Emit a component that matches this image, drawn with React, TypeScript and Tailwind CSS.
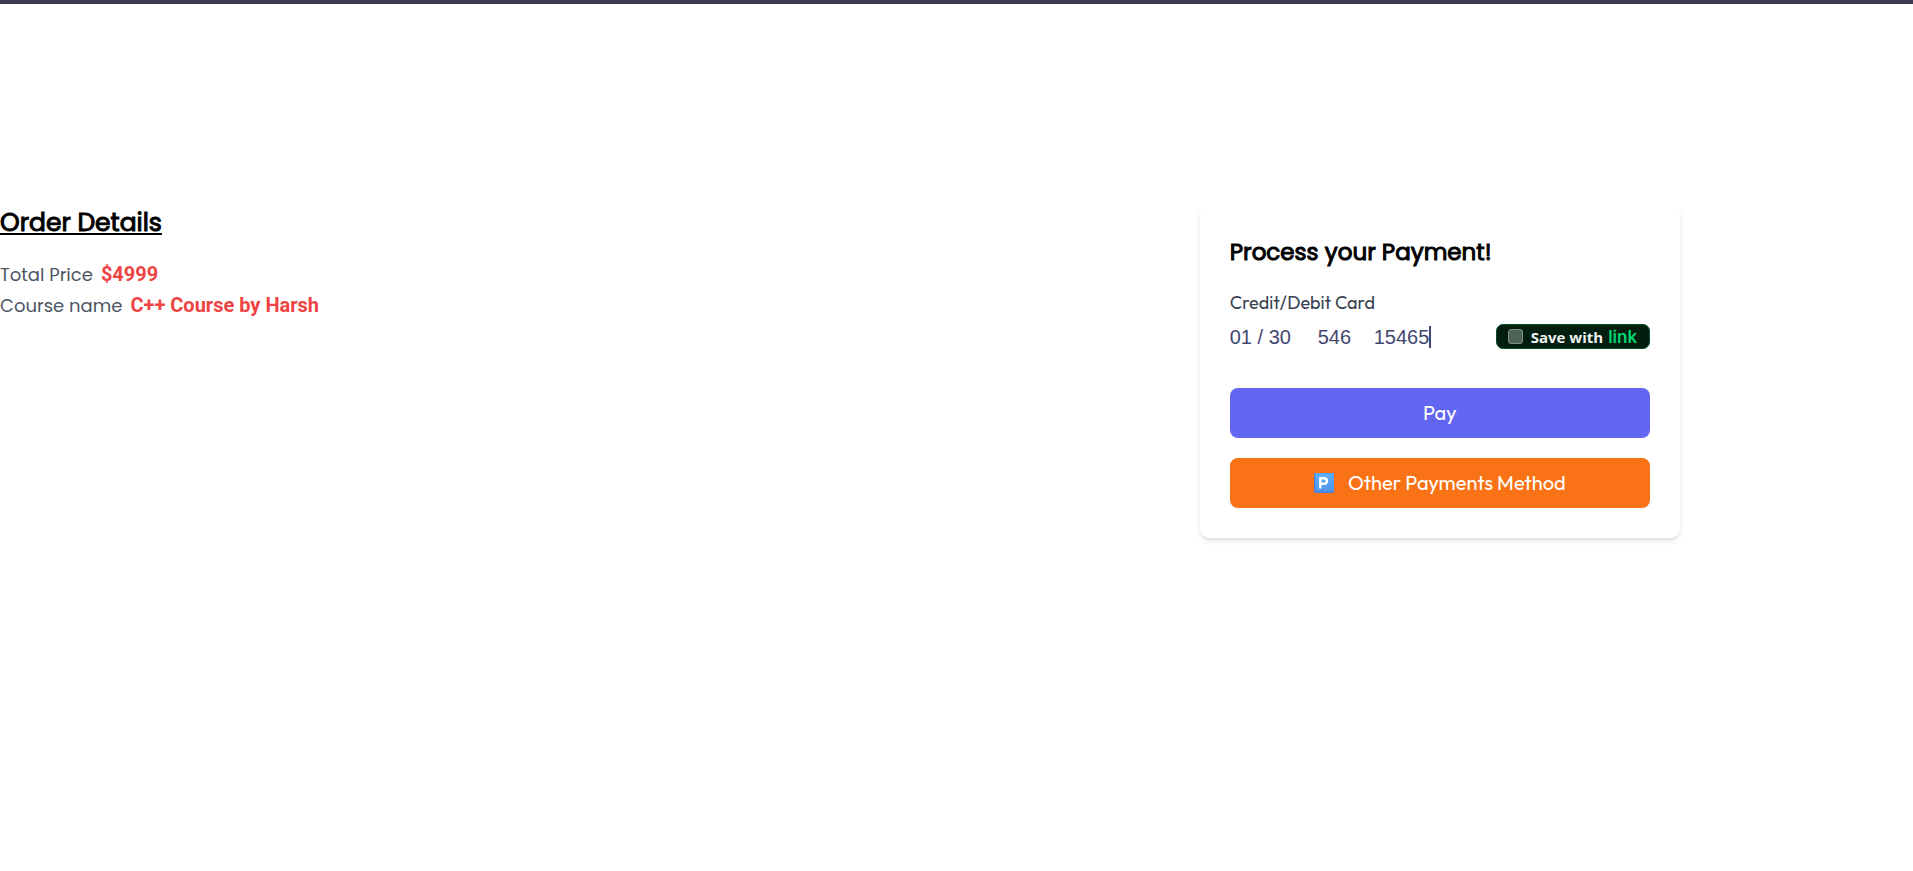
import { useState } from "react";

const heading =
  "font-['Poppins','Open_Sans',sans-serif] font-normal text-black [-webkit-text-stroke:1px_#000]";
const rounded = "font-['Outfit','Lato',sans-serif]";

function OrderRow({ label, value }: { label: string; value: string }) {
  return (
    <div className="flex items-baseline gap-2 leading-[30px]">
      <dt className="font-['Poppins','Open_Sans',sans-serif] text-[18px] text-[#4b5563]">{label}</dt>
      <dd className="font-['Roboto',sans-serif] text-[20px] font-bold text-[#ef4444]">{value}</dd>
    </div>
  );
}

function OrderDetails() {
  return (
    <section>
      <h1 className={`${heading} text-[25px] leading-[38px] underline decoration-2 underline-offset-2`}>
        Order Details
      </h1>
      <dl className="mt-[17px]">
        <OrderRow label="Total Price" value="$4999" />
        <OrderRow label="Course name" value="C++ Course by Harsh" />
      </dl>
    </section>
  );
}

function SaveWithLink() {
  return (
    <label className="ml-auto flex h-[25px] w-[154px] items-center rounded-[7px] border border-[#00502b] bg-[#011e0f] pl-[11px]">
      <input
        type="checkbox"
        className="size-[15px] appearance-none rounded-[3px] border border-[#80908a] bg-[#4f6459]"
      />
      <span className="ml-2 pt-[2px] font-['Open_Sans',sans-serif] text-[15px] leading-[21px] font-bold text-[#f0f2f1]">
        Save with
      </span>
      <span className="ml-[5px] font-['Inter',sans-serif] text-[17px] leading-[20px] font-semibold text-[#00d66f]">
        link
      </span>
    </label>
  );
}

function CardFields() {
  const [expiry, setExpiry] = useState("01 / 30");
  const [cvc, setCvc] = useState("546");
  const [zip, setZip] = useState("15465");
  return (
    <div className="flex h-[25px] items-center font-['Liberation_Sans',Arial,sans-serif] text-[20px] leading-[24px] text-[#424770]">
      <input
        id="card"
        aria-label="Expiry date"
        className="w-[88px] outline-none"
        value={expiry}
        onChange={(e) => setExpiry(e.target.value)}
      />
      <input
        aria-label="Security code"
        className="w-14 outline-none"
        value={cvc}
        onChange={(e) => setCvc(e.target.value)}
      />
      <input
        aria-label="Postal code"
        className="w-14 outline-none"
        value={zip}
        onChange={(e) => setZip(e.target.value)}
      />
      <span className="-ml-px h-[22px] w-[2px] bg-[#424770]" />
      <SaveWithLink />
    </div>
  );
}

function ParkingIcon() {
  return (
    <svg viewBox="0 0 20 20" className="size-5" aria-hidden="true">
      <defs>
        <linearGradient id="tile" x1="0" y1="0" x2="0" y2="1">
          <stop offset="0" stopColor="#5cb2fb" />
          <stop offset="1" stopColor="#5095ec" />
        </linearGradient>
      </defs>
      <rect width="20" height="20" rx="1.5" fill="#4b80d8" />
      <rect x="1.2" y="0.3" width="18.5" height="18" rx="1" fill="url(#tile)" />
      <path
        d="M6.3 14.6V5.2h3.8a2.8 2.8 0 0 1 0 5.6H6.3"
        fill="none"
        stroke="#fff"
        strokeWidth="2.4"
        strokeLinecap="round"
        strokeLinejoin="round"
      />
    </svg>
  );
}

function PaymentCard() {
  return (
    <section className="mx-auto w-full max-w-[480px] rounded-[10px] bg-white p-[30px] shadow-md">
      <h2 className={`${heading} text-[23px] leading-[36px]`}>Process your Payment!</h2>
      <form onSubmit={(e) => e.preventDefault()}>
        <label htmlFor="card" className={`${rounded} mt-[19px] mb-[7px] block text-[18px] leading-[28px] text-[#374151]`}>
          Credit/Debit Card
        </label>
        <CardFields />
        <button type="submit" className={`${rounded} mt-[39px] h-[50px] w-full rounded-lg bg-[#6366f1] text-[20px] text-white`}>
          Pay
        </button>
        <button
          type="button"
          className={`${rounded} mt-5 flex h-[50px] w-full items-center justify-center gap-[14px] rounded-lg bg-[#f97316] text-[20px] text-white`}
        >
          <ParkingIcon />
          Other Payments Method
        </button>
      </form>
    </section>
  );
}

export default function App() {
  return (
    <div className="min-h-screen border-t-4 border-[#3a3b4f] bg-white">
      <main className="grid grid-cols-2 items-start gap-5 pt-[200px]">
        <OrderDetails />
        <PaymentCard />
      </main>
    </div>
  );
}
